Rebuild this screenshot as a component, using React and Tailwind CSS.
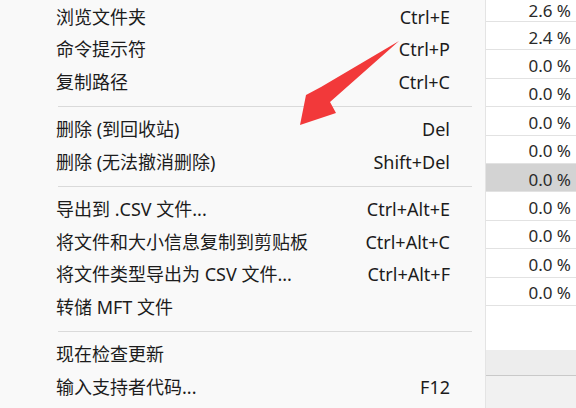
import React from "react";

const groups = [
  [
    ["浏览文件夹", "Ctrl+E"],
    ["命令提示符", "Ctrl+P"],
    ["复制路径", "Ctrl+C"],
  ],
  [
    ["删除 (到回收站)", "Del"],
    ["删除 (无法撤消删除)", "Shift+Del"],
  ],
  [
    ["导出到 .CSV 文件...", "Ctrl+Alt+E"],
    ["将文件和大小信息复制到剪贴板", "Ctrl+Alt+C"],
    ["将文件类型导出为 CSV 文件...", "Ctrl+Alt+F"],
    ["转储 MFT 文件", ""],
  ],
  [
    ["现在检查更新", ""],
    ["输入支持者代码...", "F12"],
  ],
];

const values = ["2.6 %", "2.4 %", "0.0 %", "0.0 %", "0.0 %", "0.0 %", "0.0 %", "0.0 %", "0.0 %", "0.0 %", "0.0 %"];

const font = {
  fontFamily: '"Segoe UI", "Noto Sans", "Noto Sans CJK SC", sans-serif',
};

const MenuItem = ({ label, shortcut }) => (
  <div className="flex h-[32.5px] items-center justify-between pl-[56px] pr-[35px] text-[18px] text-[#1c1c1c]">
    <span>{label}</span>
    <span>{shortcut}</span>
  </div>
);

const Arrow = () => (
  <svg
    className="pointer-events-none absolute left-0 top-0"
    width="576"
    height="408"
    viewBox="0 0 576 408"
  >
    <polygon
      points="399,41 321,87 306,95 300,125 336,113 330,102"
      fill="#f2393a"
    />
  </svg>
);

export default function App() {
  return (
    <div className="relative flex h-[408px] w-[576px] overflow-hidden bg-[#f9f9f9]" style={font}>
      {/* context menu */}
      <div className="w-[485px] shrink-0 pt-[1px]">
        {groups.map((group, gi) => (
          <div key={gi}>
            {gi > 0 && (
              <div className="flex h-[15px] items-center pl-[58px] pr-[13px]">
                <div className="h-px w-full bg-[#dadada]" />
              </div>
            )}
            {group.map(([label, shortcut]) => (
              <MenuItem key={label} label={label} shortcut={shortcut} />
            ))}
          </div>
        ))}
      </div>

      {/* list behind the menu */}
      <div className="flex flex-1 flex-col border-l border-[#e4e4e4] bg-white">
        <div className="flex flex-col">
          {values.map((v, i) => (
            <div
              key={i}
              className={`flex items-center justify-end border-b border-[#e2e2e2] pr-[5px] text-[17px] leading-none text-[#2a2a2a] ${
                i === 0 ? "h-[22px] pt-0" : "h-[28.4px] pt-[3px]"
              } ${i === 6 ? "bg-[#d3d3d3]" : "bg-white"}`}
            >
              {v}
            </div>
          ))}
        </div>
        <div className="h-[44px] bg-white" />
        <div className="h-[26px] border-b border-[#c9c9c9] bg-[#ededed]" />
        <div className="flex-1 bg-[#f1f1f1]" />
      </div>

      <Arrow />
    </div>
  );
}
